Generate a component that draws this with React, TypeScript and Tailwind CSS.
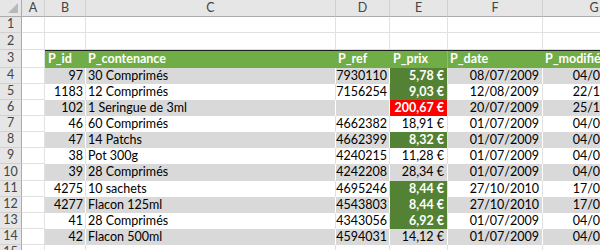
const cols = [
    { key: 'A', w: 'w-[23px]' },
    { key: 'B', w: 'w-[41px]' },
    { key: 'C', w: 'w-[250px]' },
    { key: 'D', w: 'w-[54px]' },
    { key: 'E', w: 'w-[58px]' },
    { key: 'F', w: 'w-[95px]' },
    { key: 'G', w: 'w-[103px]' },
]

type Prix = 'green' | 'red' | 'none'

type Produit = {
    id: string
    contenance: string
    ref: string
    prix: string
    etat: Prix
    date: string
    modif: string
}

const produits: Produit[] = [
    { id: '97', contenance: '30 Comprimés', ref: '7930110', prix: '5,78 €', etat: 'green', date: '08/07/2009', modif: '04/07/2009' },
    { id: '1183', contenance: '12 Comprimés', ref: '7156254', prix: '9,03 €', etat: 'green', date: '12/08/2009', modif: '22/10/2010' },
    { id: '102', contenance: '1 Seringue de 3ml', ref: '', prix: '200,67 €', etat: 'red', date: '20/07/2009', modif: '25/10/2010' },
    { id: '46', contenance: '60 Comprimés', ref: '4662382', prix: '18,91 €', etat: 'none', date: '01/07/2009', modif: '04/07/2009' },
    { id: '47', contenance: '14 Patchs', ref: '4662399', prix: '8,32 €', etat: 'green', date: '01/07/2009', modif: '04/07/2009' },
    { id: '38', contenance: 'Pot 300g', ref: '4240215', prix: '11,28 €', etat: 'none', date: '01/07/2009', modif: '04/07/2009' },
    { id: '39', contenance: '28 Comprimés', ref: '4242208', prix: '28,34 €', etat: 'none', date: '01/07/2009', modif: '04/07/2009' },
    { id: '4275', contenance: '10 sachets', ref: '4695246', prix: '8,44 €', etat: 'green', date: '27/10/2010', modif: '17/03/2011' },
    { id: '4277', contenance: 'Flacon 125ml', ref: '4543803', prix: '8,44 €', etat: 'green', date: '27/10/2010', modif: '17/03/2011' },
    { id: '41', contenance: '28 Comprimés', ref: '4343056', prix: '6,92 €', etat: 'green', date: '01/07/2009', modif: '04/07/2009' },
    { id: '42', contenance: 'Flacon 500ml', ref: '4594031', prix: '14,12 €', etat: 'none', date: '01/07/2009', modif: '04/07/2009' },
]

const RowHead = ({ n, h }: { n: number | string, h: string }) => (
    <div className={`${h} w-[22px] shrink-0 flex items-center justify-center bg-[#e6e6e6] border-r border-r-[#ababab] border-b border-b-[#d0d0d0] text-[#444] text-[12.5px]`}>
        {n}
    </div>
)

const EmptyRow = ({ n, h }: { n: number, h: string }) => (
    <div className="flex">
        <RowHead n={n} h={h} />
        {cols.map(c => (
            <div key={c.key} className={`${h} ${c.w} shrink-0 border-r border-b border-[#e1e1e1]`} />
        ))}
    </div>
)

export default function App() {
    return (
        <div className="w-[600px] h-[250px] overflow-hidden bg-white text-black text-[12.5px] leading-none" style={{ fontFamily: 'Lato, "Liberation Sans", sans-serif' }}>
            {/* entête des colonnes */}
            <div className="flex">
                <div className="h-[17px] w-[22px] shrink-0 relative bg-[#e6e6e6] border-r border-r-[#ababab] border-b border-b-[#ababab]">
                    <div className="absolute right-[3px] bottom-[3px] w-0 h-0 border-l-[10px] border-l-transparent border-b-[10px] border-b-[#b8b8b8]" />
                </div>
                {cols.map(c => (
                    <div key={c.key} className={`h-[17px] ${c.w} shrink-0 flex items-center justify-center bg-[#e6e6e6] border-r border-r-[#d0d0d0] border-b border-b-[#ababab] text-[#444] text-[12.5px]`}>
                        {c.key}
                    </div>
                ))}
            </div>

            <EmptyRow n={1} h="h-[16px]" />
            <EmptyRow n={2} h="h-[17px]" />

            {/* ligne 3 : en-tête du tableau */}
            <div className="flex">
                <RowHead n={3} h="h-[18px]" />
                <div className="h-[18px] w-[23px] shrink-0 border-r border-b border-[#e1e1e1]" />
                <div className="flex h-[18px] border-t border-t-[#1e1e1e] bg-[#70ad47] text-white font-bold">
                    <div className="w-[41px] shrink-0 pl-[3px] flex items-center">P_id</div>
                    <div className="w-[250px] shrink-0 pl-[2px] flex items-center">P_contenance</div>
                    <div className="w-[54px] shrink-0 pl-[2px] flex items-center">P_ref</div>
                    <div className="w-[58px] shrink-0 pl-[3px] flex items-center border-r border-r-[#8cc068]">P_prix</div>
                    <div className="w-[95px] shrink-0 pl-[2px] flex items-center">P_date</div>
                    <div className="w-[103px] shrink-0 pl-[2px] flex items-center whitespace-nowrap">P_modifié</div>
                </div>
            </div>

            {produits.map((p, i) => {
                const gris = i % 2 === 0
                const h = i === 6 ? 'h-[17px]' : 'h-[16px]'
                const ligne = gris ? 'bg-[#d9d9d9] border-r border-r-white' : 'bg-white border-r border-r-[#e1e1e1]'
                const prixCls = p.etat === 'green'
                    ? 'bg-[#548235] text-white font-bold border-r border-r-[#e1e1e1]'
                    : p.etat === 'red'
                        ? 'bg-[#ff0000] text-white font-bold border-r border-r-[#e1e1e1]'
                        : ligne
                return (
                    <div key={i} className="flex">
                        <RowHead n={i + 4} h={h} />
                        <div className={`${h} w-[23px] shrink-0 border-r border-b border-[#e1e1e1]`} />
                        <div className={`${h} w-[41px] shrink-0 flex items-center justify-end pr-[2px] ${ligne}`}>{p.id}</div>
                        <div className={`${h} w-[250px] shrink-0 flex items-center pl-[2px] ${ligne}`}>{p.contenance}</div>
                        <div className={`${h} w-[54px] shrink-0 flex items-center justify-end pr-[2px] ${ligne}`}>{p.ref}</div>
                        <div className={`${h} w-[58px] shrink-0 flex items-center justify-end pr-[3px] ${prixCls}`}>{p.prix}</div>
                        <div className={`${h} w-[95px] shrink-0 flex items-center justify-end pr-[3px] ${ligne}`}>{p.date}</div>
                        <div className={`${h} w-[103px] shrink-0 flex items-center justify-end pr-[3px] whitespace-nowrap ${ligne}`}>{p.modif}</div>
                    </div>
                )
            })}

            <EmptyRow n={15} h="h-[16px]" />
        </div>
    )
}
